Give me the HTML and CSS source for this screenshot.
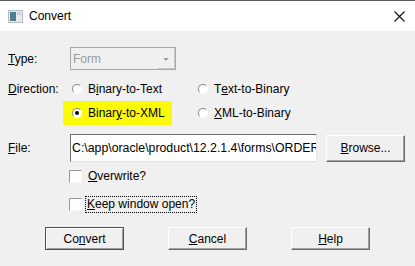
FILE: index.html
```html
<!DOCTYPE html>
<html lang="en">
<head>
  <meta charset="UTF-8" />
  <title>Convert</title>
  <link rel="stylesheet" href="styles.css">
</head>
<body>
  <div class="window">
    <div class="titlebar">
      <svg class="app-icon" width="15" height="13" viewBox="0 0 15 13">
        <rect x="0.5" y="0.5" width="14" height="12" fill="#e8eaec" stroke="#b7bcc2"/>
        <rect x="2" y="2" width="6" height="9" fill="#4f7f8c"/>
        <rect x="9" y="2" width="4" height="3" fill="#c9d3da"/>
      </svg>
      <span class="title">Convert</span>
      <svg class="close" width="11" height="11" viewBox="0 0 11 11">
        <path d="M0.5 0.5 L10.5 10.5 M10.5 0.5 L0.5 10.5" stroke="#111" stroke-width="1.1" fill="none"/>
      </svg>
    </div>

    <div class="dialog">
      <div class="row row-type">
        <span class="field-label"><u>T</u>ype:</span>
        <div class="combo">
          <span class="combo-text">Form</span>
          <span class="combo-btn"><span class="arrow"></span></span>
        </div>
      </div>

      <div class="row row-dir">
        <span class="field-label short"><u>D</u>irection:</span>
        <label class="option"><span class="radio"></span>B<u>i</u>nary-to-Text</label>
        <label class="option second"><span class="radio"></span>T<u>e</u>xt-to-Binary</label>
      </div>

      <div class="row row-xml">
        <span class="field-label short"></span>
        <label class="option highlight"><span class="radio checked"></span>Binar<u>y</u>-to-XML</label>
        <label class="option second"><span class="radio"></span><u>X</u>ML-to-Binary</label>
      </div>

      <div class="row row-file">
        <span class="field-label"><u>F</u>ile:</span>
        <input class="textbox" type="text" readonly value="C:\app\oracle\product\12.2.1.4\forms\ORDERS.fmb" />
        <button class="btn browse"><u>B</u>rowse...</button>
      </div>

      <div class="row row-check">
        <span class="checkbox"></span>
        <span class="check-text"><u>O</u>verwrite?</span>
      </div>

      <div class="row row-keep">
        <span class="checkbox"></span>
        <span class="check-text focus"><u>K</u>eep window open?</span>
      </div>

      <div class="row row-buttons">
        <button class="btn default">Co<u>n</u>vert</button>
        <button class="btn"><u>C</u>ancel</button>
        <button class="btn"><u>H</u>elp</button>
      </div>
    </div>
  </div>
</body>
</html>
```

FILE: styles.css
```css
body {
  margin: 0;
  padding: 0;
  background: #f0f0f0;
  font-family: "Liberation Sans", Arial, sans-serif;
  font-size: 12px;
  color: #000;
}

.window {
  width: 415px;
  height: 266px;
  overflow: hidden;
}

.titlebar {
  display: flex;
  align-items: center;
  height: 30px;
  border-top: 1px solid #5c5c5c;
  background: #fff;
  padding: 0 10px 0 8px;
}

.title {
  margin-left: 6px;
  font-size: 12px;
}

.close {
  margin-left: auto;
}

.dialog {
  padding: 0 8px;
}

.row {
  display: flex;
  align-items: center;
}

.field-label {
  width: 62px;
  flex: none;
}

.field-label.short {
  width: 55px;
}

/* Type */
.row-type {
  height: 23px;
  margin-top: 16px;
}

.combo {
  display: flex;
  align-items: center;
  width: 106px;
  height: 23px;
  box-sizing: border-box;
  border: 1px solid #a8a8a8;
  background: #f0f0f0;
}

.combo-text {
  flex: 1;
  padding-left: 2px;
  color: #9a9a9a;
}

.combo-btn {
  display: flex;
  align-items: center;
  justify-content: center;
  width: 16px;
  height: 20px;
  border-right: 1px solid #c8c8c8;
  border-bottom: 1px solid #c8c8c8;
}

.arrow {
  width: 0;
  height: 0;
  border-left: 3px solid transparent;
  border-right: 3px solid transparent;
  border-top: 3px solid #a0a0a0;
  margin-top: 2px;
}

/* Direction */
.row-dir {
  height: 18px;
  margin-top: 10px;
}

.row-xml {
  height: 24px;
  margin-top: 3px;
}

.option {
  display: flex;
  align-items: center;
  box-sizing: border-box;
  width: 109px;
  height: 100%;
  padding-left: 9px;
}

.option.second {
  margin-left: 17px;
  width: auto;
}

.option.highlight {
  background: #fbfb06;
}

.radio {
  position: relative;
  width: 10px;
  height: 10px;
  box-sizing: border-box;
  margin-right: 6px;
  border-radius: 50%;
  border: 1px solid;
  border-color: #8a8a8a #fff #fff #8a8a8a;
  background: #fff;
}

.radio.checked::after {
  content: "";
  position: absolute;
  left: 2px;
  top: 2px;
  width: 4px;
  height: 4px;
  border-radius: 50%;
  background: #000;
}

/* File */
.row-file {
  height: 28px;
  margin-top: 9px;
}

.textbox {
  width: 247px;
  height: 28px;
  box-sizing: border-box;
  margin: 0;
  padding: 0 0 0 1px;
  font-family: inherit;
  font-size: 12.3px;
  color: #000;
  background: #fff;
  border: 1px solid;
  border-color: #6d6d6d #e3e3e3 #e3e3e3 #6d6d6d;
  outline: none;
}

.btn {
  width: 79px;
  height: 23px;
  padding: 0;
  font-family: inherit;
  font-size: 12px;
  color: #000;
  background: #f0f0f0;
  border: 1px solid;
  border-color: #fff #6b6b6b #6b6b6b #fff;
  box-shadow: inset -1px -1px 0 #a0a0a0;
}

.btn.browse {
  margin-left: 9px;
  height: 27px;
}

.btn.default {
  border-color: #505050;
  box-shadow: inset 1px 1px 0 #fff, inset -1px -1px 0 #a0a0a0;
}

/* Checkboxes */
.row-check {
  height: 14px;
  margin-top: 7px;
  padding-left: 61px;
}

.row-keep {
  height: 17px;
  margin-top: 13px;
  padding-left: 61px;
}

.checkbox {
  width: 13px;
  height: 13px;
  box-sizing: border-box;
  border: 1px solid;
  border-color: #9a9a9a #f8f8f8 #f8f8f8 #9a9a9a;
  background: #fff;
  margin-right: 6px;
}

.check-text.focus {
  margin-left: -3px;
  padding: 0 1px;
  border: 1px dotted #000;
  line-height: 15px;
}

/* Buttons */
.row-buttons {
  height: 23px;
  margin-top: 14px;
  padding-left: 37px;
  gap: 44px;
}
```
